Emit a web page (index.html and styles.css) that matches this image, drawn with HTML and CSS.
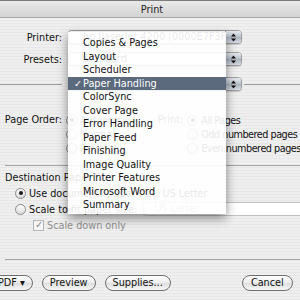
FILE: index.html
```html
<!DOCTYPE html>
<html lang="en">
<head>
    <meta charset="UTF-8">
    <title>Print</title>
    <link rel="stylesheet" href="styles.css">
</head>
<body>
    <div class="window">
        <div class="titlebar">Print</div>

        <div class="sheet">
            <div class="field-row">
                <span class="label">Printer:</span>
                <div class="popup">
                    <span class="popup-text">hp LaserJet 4200 (0000E7F3F4...</span>
                    <span class="popup-arrows"><svg width="7" height="9" viewBox="0 0 7 9"><path d="M3.5 0.5 L6 3.5 H1 Z M3.5 8.5 L6 5.5 H1 Z" fill="#111"/></svg></span>
                </div>
            </div>

            <div class="field-row">
                <span class="label">Presets:</span>
                <div class="popup">
                    <span class="popup-text">Standard</span>
                    <span class="popup-arrows"><svg width="7" height="9" viewBox="0 0 7 9"><path d="M3.5 0.5 L6 3.5 H1 Z M3.5 8.5 L6 5.5 H1 Z" fill="#111"/></svg></span>
                </div>
            </div>

            <div class="pane-row">
                <span class="rule rule-left"></span>
                <div class="popup">
                    <span class="popup-text">Paper Handling</span>
                    <span class="popup-arrows"><svg width="7" height="9" viewBox="0 0 7 9"><path d="M3.5 0.5 L6 3.5 H1 Z M3.5 8.5 L6 5.5 H1 Z" fill="#111"/></svg></span>
                </div>
                <span class="rule"></span>
            </div>

            <div class="order-section">
                <span class="label">Page Order:</span>
                <div class="radio-list">
                    <div class="radio-row"><span class="radio on"></span>Automatic</div>
                    <div class="radio-row"><span class="radio"></span>Normal</div>
                    <div class="radio-row"><span class="radio"></span>Reverse</div>
                </div>
                <span class="label label-print">Print:</span>
                <div class="radio-list print-list">
                    <div class="radio-row"><span class="radio on"></span>All Pages</div>
                    <div class="radio-row"><span class="radio"></span>Odd numbered pages</div>
                    <div class="radio-row"><span class="radio"></span>Even numbered pages</div>
                </div>
            </div>

            <div class="separator"></div>

            <div class="dest-section">
                <div class="dest-title">Destination Paper Size:</div>
                <div class="radio-row"><span class="radio on"></span>Use documents paper size:<span class="dest-value">US Letter</span></div>
                <div class="radio-row">
                    <span class="radio"></span>Scale to fit paper size:
                    <div class="popup popup-disabled">
                        <span class="popup-text">US Letter</span>
                        <span class="popup-arrows"><svg width="7" height="9" viewBox="0 0 7 9"><path d="M3.5 0.5 L6 3.5 H1 Z M3.5 8.5 L6 5.5 H1 Z" fill="#9a9a9a"/></svg></span>
                    </div>
                </div>
                <div class="check-row"><span class="checkbox">&#10003;</span>Scale down only</div>
            </div>

            <div class="separator bottom-sep"></div>

            <div class="button-row">
                <div class="button-group">
                    <span class="pill">PDF &#9662;</span>
                    <span class="pill">Preview</span>
                    <span class="pill">Supplies...</span>
                </div>
                <div class="button-group button-group-right">
                    <span class="pill pill-cancel">Cancel</span>
                    <span class="pill pill-default">Print</span>
                </div>
            </div>
        </div>

        <!-- open pane menu -->
        <ul class="menu">
            <li>Copies &amp; Pages</li>
            <li>Layout</li>
            <li>Scheduler</li>
            <li class="selected"><span class="check">&#10003;</span>Paper Handling</li>
            <li>ColorSync</li>
            <li>Cover Page</li>
            <li>Error Handling</li>
            <li>Paper Feed</li>
            <li>Finishing</li>
            <li>Image Quality</li>
            <li>Printer Features</li>
            <li>Microsoft Word</li>
            <li>Summary</li>
        </ul>
    </div>
</body>
</html>
```

FILE: styles.css
```css
body {
    margin: 0;
    font-family: "DejaVu Sans", sans-serif;
    font-size: 9.7px;
    color: #111;
    background: #6e6e6e;
}
.window {
    position: relative;
    width: 300px;
    height: 300px;
    overflow: hidden;
    background: repeating-linear-gradient(to bottom, #efefef 0, #efefef 2px, #e7e7e7 2px, #e7e7e7 3px);
}
.titlebar {
    height: 16px;
    line-height: 17px;
    text-align: center;
    padding-left: 4px;
    border-top: 1px solid #7c7c7c;
    border-bottom: 1px solid #a9a9a9;
    background: linear-gradient(to bottom, #e9e9e9, #d3d3d3);
    color: #222;
}
.sheet {
    padding-top: 12px;
}
.field-row {
    display: flex;
    align-items: center;
    gap: 6px;
    height: 14px;
    margin-bottom: 8px;
}
.label {
    width: 62px;
    text-align: right;
    flex: none;
}
.popup {
    display: flex;
    width: 174px;
    height: 14px;
    box-sizing: border-box;
    border: 1px solid #9c9c9c;
    border-radius: 3px 4px 4px 3px;
    background: #fff;
    box-shadow: 0 1px 1px rgba(0, 0, 0, 0.15);
    flex: none;
}
.popup-text {
    flex: 1;
    padding-left: 14px;
    line-height: 12px;
    white-space: nowrap;
    overflow: hidden;
    color: #111;
}
.popup-arrows {
    width: 15px;
    display: flex;
    align-items: center;
    justify-content: center;
    border-left: 1px solid #9aa0aa;
    border-radius: 0 3px 3px 0;
    background: linear-gradient(to bottom, #e7ebf0, #b9c1cc 50%, #a9b2bf 51%, #d5dbe3);
}
.pane-row {
    display: flex;
    align-items: center;
    height: 14px;
    margin-top: 11px;
}
.rule {
    flex: 1;
    height: 1px;
    margin-left: 2px;
    background: #9a9a9a;
}
.rule-left {
    flex: none;
    width: 62px;
    margin: 0 6px 0 0;
}
.order-section {
    display: flex;
    align-items: flex-start;
    margin-top: 22px;
    height: 43px;
}
.order-section .label {
    line-height: 14px;
    margin-right: 4px;
}
.label-print {
    width: auto;
    margin-left: 28px;
    color: #333;
}
.radio-list {
    display: flex;
    flex-direction: column;
}
.print-list {
    letter-spacing: -0.5px;
}
.radio-row {
    display: flex;
    align-items: center;
    height: 14px;
    white-space: nowrap;
}
.radio {
    width: 9px;
    height: 9px;
    border-radius: 50%;
    border: 1px solid #8c8c8c;
    background: linear-gradient(to bottom, #fdfdfd, #dcdcdc);
    margin-right: 3px;
    flex: none;
    position: relative;
}
.radio.on::after {
    content: "";
    position: absolute;
    left: 2.5px;
    top: 2.5px;
    width: 4px;
    height: 4px;
    border-radius: 50%;
    background: #1a1a1a;
}
.separator {
    height: 1px;
    background: #a3a3a3;
    margin: 9px 0 0 5px;
}
.dest-section {
    padding: 5px 0 0 5px;
}
.dest-title {
    height: 14px;
    line-height: 14px;
}
.dest-section .radio-row {
    padding-left: 10px;
    height: 16px;
}
.dest-value {
    margin-left: 2px;
}
.popup-disabled {
    width: auto;
    flex: 1;
    margin-left: 6px;
    margin-right: -20px;
    border-color: #c2c2c2;
    box-shadow: none;
}
.popup-disabled .popup-text {
    padding-left: 10px;
    color: #9a9a9a;
}
.popup-disabled .popup-arrows {
    background: #f4f4f4;
    border-left-color: #d2d2d2;
}
.check-row {
    display: flex;
    align-items: center;
    height: 16px;
    padding-left: 28px;
    color: #8e8e8e;
}
.checkbox {
    width: 9px;
    height: 9px;
    border: 1px solid #b4b4b4;
    background: #f6f6f6;
    margin-right: 3px;
    font-size: 10px;
    line-height: 8px;
    color: #8a8a8a;
    text-indent: 1px;
}
.bottom-sep {
    margin-top: 26px;
}
.button-row {
    display: flex;
    justify-content: space-between;
    width: 360px;
    margin: 15px 0 0 -10px;
}
.button-group {
    display: flex;
    gap: 9px;
}
.pill {
    flex: none;
    height: 14px;
    line-height: 14px;
    padding: 0 7px;
    border: 1px solid #6f6f6f;
    border-radius: 8px;
    background: linear-gradient(to bottom, #ffffff, #ececec 50%, #dedede 51%, #f7f7f7);
    color: #111;
    white-space: nowrap;
}
.pill-cancel {
    padding: 0 8px;
}
.pill-default {
    padding: 0 12px;
    border-color: #5f6b7b;
    background: linear-gradient(to bottom, #dfe4ea, #a9b3c0 50%, #97a3b2 51%, #c9d1db);
}
.menu {
    position: absolute;
    left: 68px;
    top: 32px;
    width: 158px;
    margin: 0;
    padding: 4px 0 2px;
    list-style: none;
    background: rgba(255, 255, 255, 0.9);
    box-shadow: 0 4px 10px rgba(0, 0, 0, 0.45);
}
.menu li {
    position: relative;
    height: 13.5px;
    line-height: 13.5px;
    padding-left: 15px;
    white-space: nowrap;
}
.menu li.selected {
    background: #5c6a7e;
    color: #fff;
}
.check {
    position: absolute;
    left: 6px;
}
```
